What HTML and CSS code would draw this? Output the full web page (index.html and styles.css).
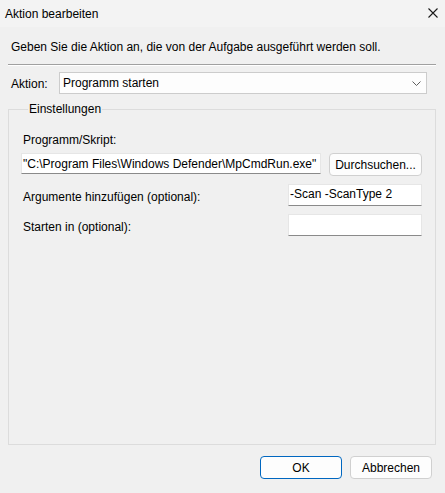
FILE: index.html
```html
<!DOCTYPE html>
<html lang="de">
<head>
<meta charset="utf-8">
<title>Aktion bearbeiten</title>
<link rel="stylesheet" href="styles.css">
</head>
<body>
<div class="window">
  <div class="titlebar">
    <span class="title">Aktion bearbeiten</span>
    <svg class="close" width="10" height="10" viewBox="0 0 10 10" aria-hidden="true">
      <path d="M0.5 0.5 L9.5 9.5 M9.5 0.5 L0.5 9.5" stroke="#1a1a1a" stroke-width="1.1" fill="none"/>
    </svg>
  </div>

  <div class="dialog">
    <p class="intro">Geben Sie die Aktion an, die von der Aufgabe ausgeführt werden soll.</p>
    <div class="separator"></div>

    <div class="action-row">
      <span class="action-label">Aktion:</span>
      <div class="combo">
        <span>Programm starten</span>
        <svg class="chevron" width="9" height="5" viewBox="0 0 9 5" aria-hidden="true">
          <path d="M0.5 0.5 L4.5 4.5 L8.5 0.5" stroke="#5f5f5f" stroke-width="1" fill="none"/>
        </svg>
      </div>
    </div>

    <fieldset class="group">
      <legend>Einstellungen</legend>

      <div class="field-label">Programm/Skript:</div>
      <div class="program-row">
        <div class="textbox program">"C:\Program Files\Windows Defender\MpCmdRun.exe"</div>
        <div class="button browse">Durchsuchen...</div>
      </div>

      <div class="option-row">
        <span class="option-label">Argumente hinzufügen (optional):</span>
        <div class="textbox small">-Scan -ScanType 2</div>
      </div>
      <div class="option-row">
        <span class="option-label">Starten in (optional):</span>
        <div class="textbox small"></div>
      </div>
    </fieldset>

    <div class="buttons">
      <div class="button default">OK</div>
      <div class="button">Abbrechen</div>
    </div>
  </div>
</div>
</body>
</html>
```

FILE: styles.css
```css
* {
  box-sizing: border-box;
}

html, body {
  margin: 0;
  padding: 0;
}

body {
  width: 445px;
  height: 493px;
  background: #f0f0f0;
  font-family: "Liberation Sans", Arial, sans-serif;
  font-size: 12px;
  line-height: 16px;
  color: #000;
  overflow: hidden;
}

.window {
  display: flex;
  flex-direction: column;
  height: 100%;
}

.titlebar {
  height: 27px;
  padding: 0 7px 0 5px;
  display: flex;
  align-items: center;
  justify-content: space-between;
  background: #f3f3f3;
}

.close {
  display: block;
  margin-top: -2px;
}

.dialog {
  padding: 0 9px 0 8px;
  display: flex;
  flex-direction: column;
}

.intro {
  margin: 12px 0 0 3px;
}

.separator {
  margin-top: 9px;
  height: 2px;
  border-top: 1px solid #a0a0a0;
  border-bottom: 1px solid #ffffff;
}

.action-row {
  margin-top: 6px;
  margin-right: 9px;
  display: flex;
  align-items: center;
  height: 22px;
}

.action-label {
  width: 51px;
  padding-left: 3px;
  padding-top: 2px;
}

.combo {
  flex: 1;
  height: 22px;
  display: flex;
  align-items: center;
  justify-content: space-between;
  padding: 0 5px 0 3px;
  background: #fdfdfd;
  border: 1px solid #cccccc;
}

.chevron {
  display: block;
}

.group {
  margin: 7px 0 0 0;
  height: 344px;
  padding: 15px 13px 0 12px;
  border: 1px solid #dcdcdc;
  min-width: 0;
}

.group legend {
  margin-left: 7px;
  padding: 0 1px;
  line-height: 16px;
}

.field-label {
  padding-left: 2px;
}

.program-row {
  margin-top: 5px;
  display: flex;
  align-items: flex-start;
  gap: 8px;
}

.textbox {
  background: #ffffff;
  border: 1px solid #e6e6e6;
  border-bottom-color: #8a8a8a;
  padding: 1px 2px 0 1px;
  white-space: nowrap;
  overflow: hidden;
}

.textbox.program {
  width: 300px;
  height: 21px;
  padding-top: 2px;
}

.textbox.small {
  width: 134px;
  height: 22px;
}

.button {
  height: 23px;
  display: flex;
  align-items: center;
  justify-content: center;
  background: #fdfdfd;
  border: 1px solid #d0d0d0;
  border-radius: 4px;
}

.button.browse {
  width: 93px;
}

.option-row {
  margin-top: 8px;
  display: flex;
  justify-content: space-between;
  align-items: center;
}

.option-label {
  padding-left: 2px;
  padding-top: 4px;
}

.buttons {
  margin-top: 11px;
  display: flex;
  justify-content: flex-end;
  gap: 8px;
  padding-right: 4px;
}

.buttons .button {
  width: 82px;
}

.button.default {
  border-color: #0067c0;
}
```
